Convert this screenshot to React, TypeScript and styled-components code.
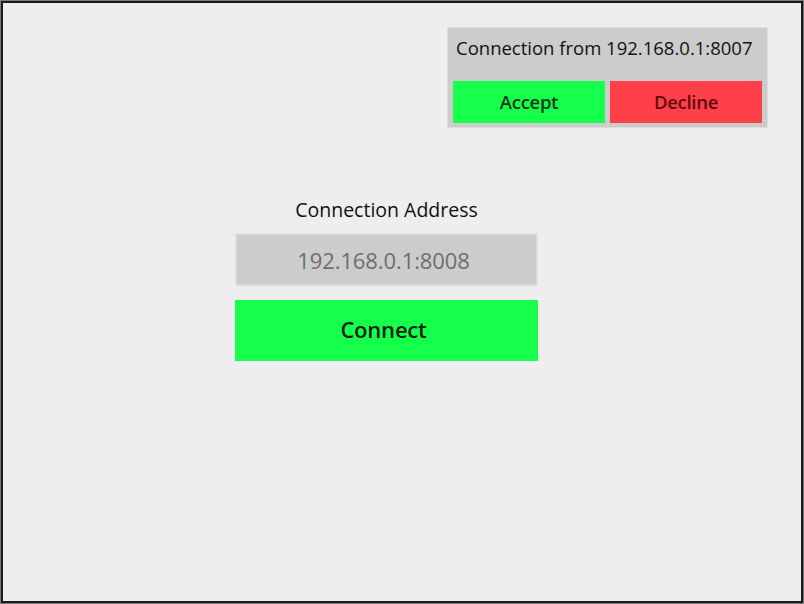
import React, { useState } from 'react';
import styled, { createGlobalStyle } from 'styled-components';

// ------------------------------------------------------------------------------------------------

const GlobalStyle = createGlobalStyle`
  html, body {
    margin: 0;
    padding: 0;
    background: #eeeeee;
  }
  * {
    box-sizing: border-box;
  }
`;

type Tone = 'accept' | 'decline';

const toneMap = {
  accept: { bg: '#15ff4b', fg: '#0b3a14' },
  decline: { bg: '#ff4049', fg: '#620a0c' },
};

export default function App() {
  const [address, setAddress] = useState('');
  const [incoming, setIncoming] = useState(true);

  return (
    <>
      <GlobalStyle />
      <Frame>
        <Screen>
          <TopBar>
            {incoming && (
              <Notice>
                <NoticeText>Connection from 192.168.0.1:8007</NoticeText>
                <NoticeActions>
                  <ActionButton tone="accept" onClick={() => setIncoming(false)}>
                    Accept
                  </ActionButton>
                  <ActionButton tone="decline" onClick={() => setIncoming(false)}>
                    Decline
                  </ActionButton>
                </NoticeActions>
              </Notice>
            )}
          </TopBar>

          <ConnectForm onSubmit={e => e.preventDefault()}>
            <FieldLabel htmlFor="address">Connection Address</FieldLabel>
            <AddressInput
              id="address"
              placeholder="192.168.0.1:8008"
              value={address}
              onChange={e => setAddress(e.target.value)}
            />
            <ConnectButton type="submit">Connect</ConnectButton>
          </ConnectForm>
        </Screen>
      </Frame>
    </>
  );
}

//------------------------------------------------------------------------------------------------

const Frame = styled.div`
  width: 804px;
  height: 604px;
  border: 1px solid #7a7a7a;
`;

const Screen = styled.div`
  width: 100%;
  height: 100%;
  border: 2px solid #1b1b1b;
  background: #eeeeee;
  display: flex;
  flex-direction: column;
  font-family: 'Open Sans', 'Noto Sans', sans-serif;
`;

const TopBar = styled.div`
  display: flex;
  justify-content: flex-end;
  padding: 24px 33px 0 0;
  height: 127px;
`;

const Notice = styled.div`
  width: 321px;
  height: 101px;
  background: #cccccc;
  border: 1px solid #dddddd;
  padding: 0 5px 4px;
  display: flex;
  flex-direction: column;
  justify-content: space-between;
`;

const NoticeText = styled.div`
  font-size: 18.5px;
  letter-spacing: 0;
  color: #111111;
  padding: 8px 0 0 3px;
  line-height: 24px;
  white-space: nowrap;
`;

const NoticeActions = styled.div`
  display: flex;
  gap: 5px;
`;

const ActionButton = styled.button<{ tone: Tone }>`
  flex: 1;
  height: 42px;
  border: none;
  padding: 0 0 1px;
  font-family: inherit;
  font-size: 18.5px;
  font-weight: 600;
  letter-spacing: -0.3px;
  background: ${({ tone }) => toneMap[tone].bg};
  color: ${({ tone }) => toneMap[tone].fg};
  cursor: pointer;
`;

const ConnectForm = styled.form`
  width: 303px;
  margin: 67px 0 0 232px;
  display: flex;
  flex-direction: column;
  align-items: stretch;
`;

const FieldLabel = styled.label`
  text-align: center;
  font-size: 19.5px;
  letter-spacing: 0;
  line-height: 26px;
  color: #111111;
  margin-bottom: 10px;
`;

const AddressInput = styled.input`
  height: 53px;
  border: 2px solid #dddddd;
  background: #cccccc;
  text-align: center;
  padding: 0 6px 0 0;
  font-family: inherit;
  font-size: 22px;
  letter-spacing: -0.1px;
  color: #333333;
  outline: none;

  &::placeholder {
    color: #6e6e6e;
  }
`;

const ConnectButton = styled.button`
  margin-top: 14px;
  height: 61px;
  border: none;
  padding: 0 6px 3px 0;
  background: #15ff4b;
  color: #0a1f0e;
  font-family: inherit;
  font-size: 22px;
  font-weight: 600;
  letter-spacing: -0.2px;
  cursor: pointer;
`;
